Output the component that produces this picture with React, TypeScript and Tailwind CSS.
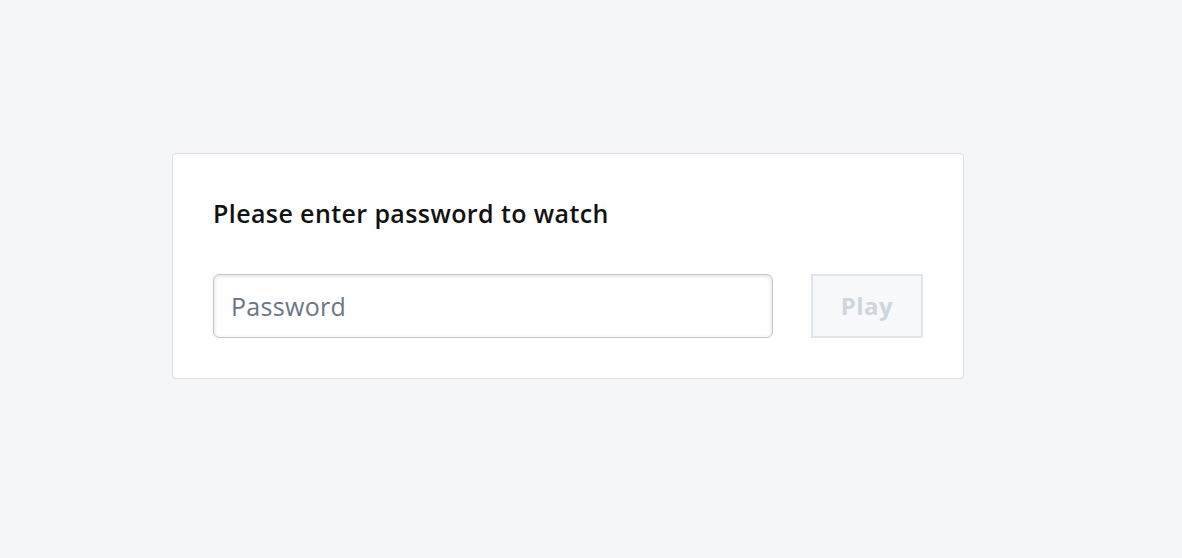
import React from "react";

export default function App() {
  return (
    <div
      className="w-full h-[558px] bg-[#f5f6f8] flex items-start"
      style={{ fontFamily: '"Open Sans", "Noto Sans", sans-serif' }}
    >
      <div className="mt-[153px] ml-[172px] w-[792px] bg-white border border-[#dde1e6] rounded-[4px] p-[40px]">
        <h1 className="text-[25px] leading-[38px] font-semibold tracking-[0.4px] text-[#111] mb-[42px]">
          Please enter password to watch
        </h1>
        <div className="flex justify-between">
          <input
            type="password"
            placeholder="Password"
            className="w-[560px] h-[64px] rounded-[6px] border border-[#c4c4c4] bg-white px-[17px] text-[25px] tracking-[0.3px] text-[#333] placeholder:text-[#6b7686] shadow-[inset_0_1px_4px_rgba(0,0,0,0.14)] outline-none"
          />
          <button className="w-[112px] h-[64px] border-2 border-[#e1e4e8] bg-[#f7f8fa] text-[24px] font-bold tracking-[0.5px] text-[#cfd5dc]">
            Play
          </button>
        </div>
      </div>
    </div>
  );
}
